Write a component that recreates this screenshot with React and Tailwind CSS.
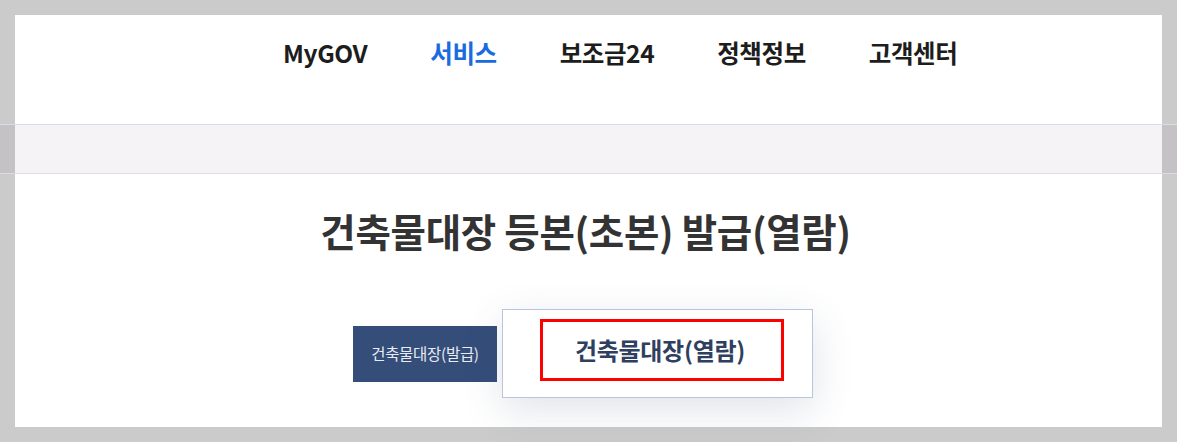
export default function App() {
  const font = { fontFamily: '"Noto Sans CJK KR", "Noto Sans", sans-serif' };
  const navItems = [
    { label: "MyGOV", active: false },
    { label: "서비스", active: true },
    { label: "보조금24", active: false },
    { label: "정책정보", active: false },
    { label: "고객센터", active: false },
  ];
  return (
    <div
      className="w-[1177px] h-[442px] bg-[#cbcbcb] pt-[15px] flex flex-col overflow-hidden"
      style={font}
    >
      {/* header */}
      <div className="flex h-[109px]">
        <div className="w-[15px]" />
        <div className="flex-1 bg-white">
          <nav className="flex gap-[63px] pl-[268px] pt-[22px]">
            {navItems.map((it) => (
              <a
                key={it.label}
                className={`text-[24.5px] leading-[32px] font-bold tracking-[-0.4px] ${
                  it.active ? "text-[#1a6be0]" : "text-[#1d1d1d]"
                }`}
              >
                {it.label}
              </a>
            ))}
          </nav>
        </div>
        <div className="w-[15px]" />
      </div>

      {/* band */}
      <div className="flex h-[50px] border-y border-[#dddce3]">
        <div className="w-[15px] bg-[#c4c2c4]" />
        <div className="flex-1 bg-[#f5f3f5]" />
        <div className="w-[15px] bg-[#c4c2c4]" />
      </div>

      {/* content */}
      <div className="flex h-[253px]">
        <div className="w-[15px]" />
        <div className="flex-1 bg-white flex flex-col">
          <h1 className="pt-[33px] pr-[6px] text-center text-[38.5px] leading-[46px] font-bold text-[#333333] tracking-[-0.3px]">
            건축물대장 등본(초본) 발급(열람)
          </h1>
          <div className="flex items-center gap-[5px] pl-[338px] mt-[56px]">
            <button className="w-[144px] h-[56px] bg-[#344d79] text-[#e8ecf4] text-[15.5px] tracking-[-0.3px]">
              건축물대장(발급)
            </button>
            <div className="w-[311px] h-[89px] bg-white border border-[#b9c5dd] shadow-[0_12px_40px_rgba(60,80,120,0.16)] pl-[37px] pt-[9px]">
              <div className="w-[244px] h-[62px] border-[3px] border-[#ff0000] flex items-center justify-center pr-[4px]">
                <span className="text-[24px] font-bold text-[#2f3f60] tracking-[-0.3px]">
                  건축물대장(열람)
                </span>
              </div>
            </div>
          </div>
        </div>
        <div className="w-[15px]" />
      </div>
    </div>
  );
}
